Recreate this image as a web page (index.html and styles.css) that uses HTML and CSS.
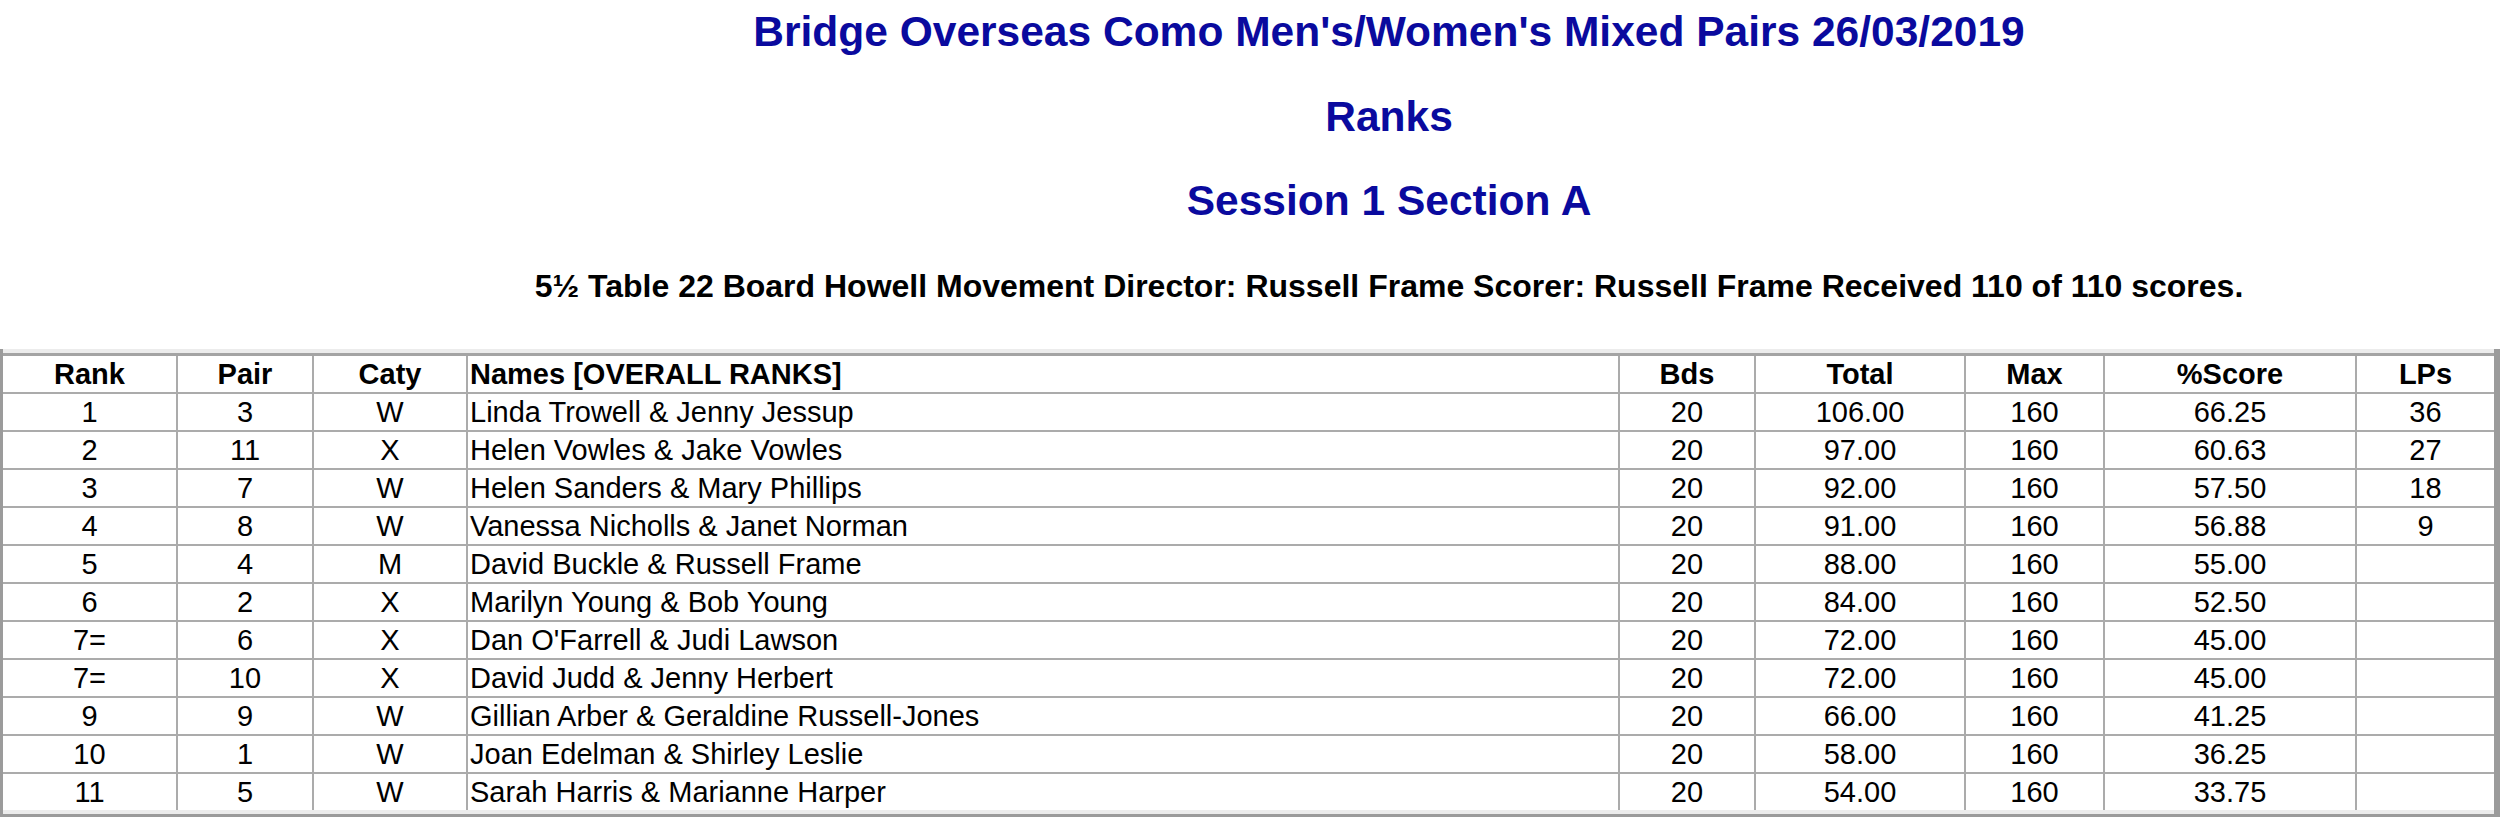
FILE: index.html
```html
<!DOCTYPE html>
<html lang="en">
<head>
<meta charset="utf-8">
<title>Ranks</title>
<link rel="stylesheet" href="styles.css">
</head>
<body>
<div class="page">
  <header class="heading">
    <h1 class="title">Bridge Overseas Como Men's/Women's Mixed Pairs 26/03/2019</h1>
    <h1 class="title">Ranks</h1>
    <h1 class="title">Session 1 Section A</h1>
    <p class="info">5½ Table 22 Board Howell Movement Director: Russell Frame Scorer: Russell Frame Received 110 of 110 scores.</p>
  </header>
  <div class="board">
    <div class="board-inner">
      <table class="ranks">
        <colgroup>
          <col class="c-rank"><col class="c-pair"><col class="c-caty"><col class="c-names"><col class="c-bds"><col class="c-total"><col class="c-max"><col class="c-score"><col class="c-lps">
        </colgroup>
        <thead>
          <tr><th>Rank</th><th>Pair</th><th>Caty</th><th class="name">Names [OVERALL RANKS]</th><th>Bds</th><th>Total</th><th>Max</th><th>%Score</th><th>LPs</th></tr>
        </thead>
        <tbody>
          <tr><td>1</td><td>3</td><td>W</td><td class="name">Linda Trowell &amp; Jenny Jessup</td><td>20</td><td>106.00</td><td>160</td><td>66.25</td><td>36</td></tr>
          <tr><td>2</td><td>11</td><td>X</td><td class="name">Helen Vowles &amp; Jake Vowles</td><td>20</td><td>97.00</td><td>160</td><td>60.63</td><td>27</td></tr>
          <tr><td>3</td><td>7</td><td>W</td><td class="name">Helen Sanders &amp; Mary Phillips</td><td>20</td><td>92.00</td><td>160</td><td>57.50</td><td>18</td></tr>
          <tr><td>4</td><td>8</td><td>W</td><td class="name">Vanessa Nicholls &amp; Janet Norman</td><td>20</td><td>91.00</td><td>160</td><td>56.88</td><td>9</td></tr>
          <tr><td>5</td><td>4</td><td>M</td><td class="name">David Buckle &amp; Russell Frame</td><td>20</td><td>88.00</td><td>160</td><td>55.00</td><td></td></tr>
          <tr><td>6</td><td>2</td><td>X</td><td class="name">Marilyn Young &amp; Bob Young</td><td>20</td><td>84.00</td><td>160</td><td>52.50</td><td></td></tr>
          <tr><td>7=</td><td>6</td><td>X</td><td class="name">Dan O'Farrell &amp; Judi Lawson</td><td>20</td><td>72.00</td><td>160</td><td>45.00</td><td></td></tr>
          <tr><td>7=</td><td>10</td><td>X</td><td class="name">David Judd &amp; Jenny Herbert</td><td>20</td><td>72.00</td><td>160</td><td>45.00</td><td></td></tr>
          <tr><td>9</td><td>9</td><td>W</td><td class="name">Gillian Arber &amp; Geraldine Russell-Jones</td><td>20</td><td>66.00</td><td>160</td><td>41.25</td><td></td></tr>
          <tr><td>10</td><td>1</td><td>W</td><td class="name">Joan Edelman &amp; Shirley Leslie</td><td>20</td><td>58.00</td><td>160</td><td>36.25</td><td></td></tr>
          <tr><td>11</td><td>5</td><td>W</td><td class="name">Sarah Harris &amp; Marianne Harper</td><td>20</td><td>54.00</td><td>160</td><td>33.75</td><td></td></tr>
        </tbody>
      </table>
    </div>
  </div>
</div>
</body>
</html>
```

FILE: styles.css
```css
html, body {
  margin: 0;
  padding: 0;
  background: #ffffff;
  overflow: hidden;
}

body {
  font-family: "Liberation Sans", Arial, sans-serif;
  color: #000000;
}

.page {
  width: 2500px;
}

.heading {
  padding-left: 278px;
  padding-top: 7px;
  text-align: center;
}

.title {
  margin: 0;
  font-size: 42.5px;
  line-height: 49px;
  font-weight: bold;
  color: #0a0a9e;
}

.title + .title {
  margin-top: 36px;
}

.title + .title + .title {
  margin-top: 35px;
}

.info {
  margin: 43px 0 0 0;
  font-size: 32px;
  line-height: 37px;
  font-weight: bold;
}

.board {
  margin-top: 44px;
  border-left: 3px solid #9b9b9b;
  border-right: 6px solid #9b9b9b;
  border-bottom: 3px solid #9b9b9b;
}

.board-inner {
  border-top: 4px solid #ececec;
  border-bottom: 4px solid #ececec;
}

.ranks {
  width: 2491px;
  table-layout: fixed;
  border-collapse: separate;
  border-spacing: 0;
  border-top: 3px solid #a4a4a4;
  font-size: 29px;
}

.c-rank { width: 175px; }
.c-pair { width: 136px; }
.c-caty { width: 154px; }
.c-names { width: 1152px; }
.c-bds { width: 136px; }
.c-total { width: 210px; }
.c-max { width: 139px; }
.c-score { width: 252px; }
.c-lps { width: 137px; }

.ranks th,
.ranks td {
  height: 36px;
  padding: 0;
  line-height: 33px;
  text-align: center;
  vertical-align: middle;
  white-space: nowrap;
  overflow: hidden;
  border-right: 2px solid #ababab;
  border-bottom: 2px solid #ababab;
}

.ranks th {
  font-weight: bold;
}

.ranks th:last-child,
.ranks td:last-child {
  border-right: 0;
}

.ranks tbody tr:last-child td {
  border-bottom: 0;
}

.ranks .name {
  text-align: left;
  padding-left: 2px;
}
```
